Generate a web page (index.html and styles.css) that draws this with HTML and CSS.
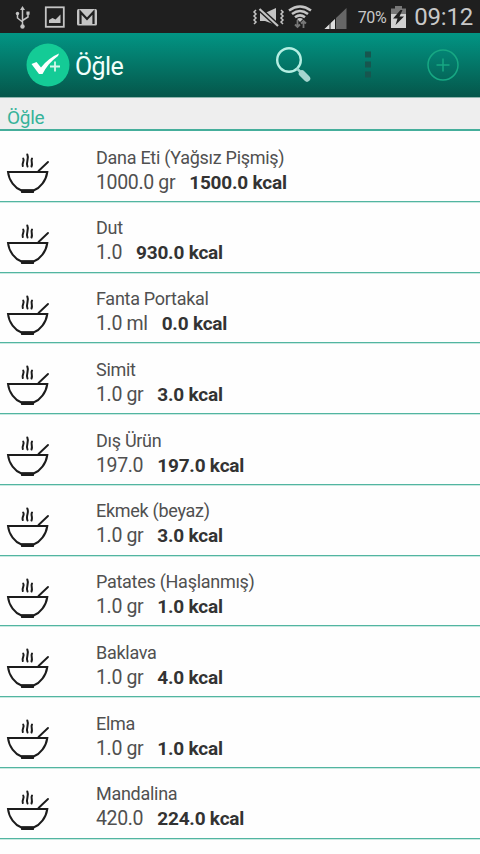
FILE: index.html
```
<!DOCTYPE html>
<html lang="tr">
<head>
    <meta charset="UTF-8">
    <meta name="viewport" content="width=device-width, initial-scale=1.0">
    <title>Öğle</title>
    <link rel="stylesheet" href="styles.css">
</head>
<body>
    <!-- shared bowl icon -->
    <svg class="defs">
        <symbol id="bowl" viewBox="0 0 50 48">
            <g fill="none" stroke="#1c1c1c">
                <path stroke-width="2" d="M8 23H47.3C46 32 40 39 34 41.3H21C15 39 9 32 8 23Z"/>
                <path stroke-width="1.9" stroke-linecap="round" d="M38.5 22L48 13"/>
                <path stroke-width="2" stroke-linecap="round" d="M23.2 9.5C25 12 21.5 14 22.8 17M27.3 5.5C29.5 10 25.5 12.5 27.5 17.5M32 9.5C30.5 12 33 14 31.5 17.5"/>
            </g>
            <path fill="#1c1c1c" d="M20.5 40.5H34.5L33.8 44H21.2Z"/>
        </symbol>
    </svg>

    <div class="status-bar">
        <svg width="100" height="33" viewBox="0 0 100 33">
            <g fill="none" stroke="#c4c4c4" stroke-width="1.5">
                <path d="M22.5 9V26M17.5 14V18L22.5 22M28 13V17L22.5 20.5"/>
                <rect x="45.8" y="7.3" width="18" height="19.5" stroke-width="1.8"/>
            </g>
            <g fill="#c4c4c4">
                <path d="M22.5 6L25 10H20Z"/>
                <circle cx="22.5" cy="26.5" r="2.2"/>
                <circle cx="17.5" cy="13.5" r="1.7"/>
                <rect x="26.4" y="11.5" width="3.2" height="3.2"/>
                <path d="M49 23V20L52.5 18L55.5 19.5L60.5 14.5V23Z"/>
                <rect x="77" y="9" width="20" height="16.5" rx="1.5"/>
            </g>
            <path fill="none" stroke="#1f1f1f" stroke-width="2.2" d="M80.5 24V12L87 19L93.5 12V24"/>
        </svg>
        <div class="status-right">
            <svg width="100" height="33" viewBox="0 0 100 33">
                <!-- vibrate / muted -->
                <g fill="none" stroke="#c4c4c4" stroke-width="1.5">
                    <path d="M7 10L5 12L7 14L5 16L7 18L5 20L7 22L5 24"/>
                    <path d="M32 10L34 12L32 14L34 16L32 18L34 20L32 22L34 24"/>
                </g>
                <path fill="#c4c4c4" d="M11 13H16L27 8V25L16 21H11Z"/>
                <path stroke="#1f1f1f" stroke-width="5" d="M10.5 9L29 26"/>
                <path stroke="#c4c4c4" stroke-width="2.2" d="M10.5 9L29 26"/>
                <!-- wifi -->
                <g fill="none" stroke="#c4c4c4" stroke-width="2.5">
                    <path d="M40 10.5Q51 2.5 62 10.5"/>
                    <path d="M43 14Q51 8 59 14"/>
                    <path d="M46 17.3Q51 13.5 56 17.3"/>
                </g>
                <path fill="#c4c4c4" d="M48 19Q51 17 54 19L51 22Z"/>
                <path fill="none" stroke="#777" stroke-width="1.8" d="M48.5 20V27M46 24.5L48.5 27L51 24.5M54.5 28V21M52 23.5L54.5 21L57 23.5"/>
                <!-- signal -->
                <path fill="#666" d="M97.5 8V29H75.5Z"/>
                <path fill="#ddd" d="M86 19V29H75.5Z"/>
                <path stroke="#1f1f1f" d="M81 20V29M86.5 17V29"/>
            </svg>
            <span class="percent">70%</span>
            <svg class="battery" width="15" height="22" viewBox="0 0 15 22">
                <path fill="#777" d="M4 0H11V2.5H15V9H0V2.5H4Z"/>
                <path fill="#d0d0d0" d="M0 8H15V22H0Z"/>
                <path fill="#1f1f1f" d="M9.5 4L2 12.5H6.5L4.5 19L13 10.5H8.5L11.5 4Z"/>
            </svg>
            <span class="clock">09:12</span>
        </div>
    </div>

    <div class="action-bar">
        <svg class="logo" width="44" height="44" viewBox="0 0 44 44">
            <circle cx="22" cy="22" r="21.5" fill="#14cb96"/>
            <path fill="#fff" d="M5.5 21L10.5 19L15 24.5C20 18 26 13.5 33 10.5L32 13C25 18 20 24 16.5 31H13Z"/>
            <path stroke="#d5f7ea" stroke-width="1.8" d="M24 23.5H34M29 18.5V28.5"/>
        </svg>
        <h1>Öğle</h1>
        <div class="actions">
            <svg width="38" height="38" viewBox="0 0 38 38">
                <circle cx="14" cy="14" r="11.8" fill="none" stroke="#b5eee2" stroke-width="2.4"/>
                <path stroke="#9fd5ce" stroke-width="2.5" d="M22 22.5L26 26.5"/>
                <path stroke="#a5d5cf" stroke-width="6.5" stroke-linecap="round" d="M27 27.5L32 32.5"/>
            </svg>
            <svg class="more" width="8" height="30" viewBox="0 0 8 30">
                <path fill="#17564f" d="M1 1.5H7V7.5H1ZM1 11.5H7V17.5H1ZM1 21.5H7V27.5H1Z"/>
            </svg>
            <svg width="34" height="34" viewBox="0 0 34 34">
                <g fill="none" stroke="#17a883" stroke-width="1.5">
                    <circle cx="17" cy="17" r="15"/>
                    <path d="M17 10.5V23.5M10.5 17H23.5"/>
                </g>
            </svg>
        </div>
    </div>

    <h2 class="section-title">Öğle</h2>

    <ul class="food-list">
        <li class="food">
            <svg class="icon"><use href="#bowl"/></svg>
            <div>
                <div class="name">Dana Eti (Yağsız Pişmiş)</div>
                <div class="detail"><span>1000.0 gr</span><b>1500.0 kcal</b></div>
            </div>
        </li>
        <li class="food">
            <svg class="icon"><use href="#bowl"/></svg>
            <div>
                <div class="name">Dut</div>
                <div class="detail"><span>1.0</span><b>930.0 kcal</b></div>
            </div>
        </li>
        <li class="food">
            <svg class="icon"><use href="#bowl"/></svg>
            <div>
                <div class="name">Fanta Portakal</div>
                <div class="detail"><span>1.0 ml</span><b>0.0 kcal</b></div>
            </div>
        </li>
        <li class="food">
            <svg class="icon"><use href="#bowl"/></svg>
            <div>
                <div class="name">Simit</div>
                <div class="detail"><span>1.0 gr</span><b>3.0 kcal</b></div>
            </div>
        </li>
        <li class="food">
            <svg class="icon"><use href="#bowl"/></svg>
            <div>
                <div class="name">Dış Ürün</div>
                <div class="detail"><span>197.0</span><b>197.0 kcal</b></div>
            </div>
        </li>
        <li class="food">
            <svg class="icon"><use href="#bowl"/></svg>
            <div>
                <div class="name">Ekmek (beyaz)</div>
                <div class="detail"><span>1.0 gr</span><b>3.0 kcal</b></div>
            </div>
        </li>
        <li class="food">
            <svg class="icon"><use href="#bowl"/></svg>
            <div>
                <div class="name">Patates (Haşlanmış)</div>
                <div class="detail"><span>1.0 gr</span><b>1.0 kcal</b></div>
            </div>
        </li>
        <li class="food">
            <svg class="icon"><use href="#bowl"/></svg>
            <div>
                <div class="name">Baklava</div>
                <div class="detail"><span>1.0 gr</span><b>4.0 kcal</b></div>
            </div>
        </li>
        <li class="food">
            <svg class="icon"><use href="#bowl"/></svg>
            <div>
                <div class="name">Elma</div>
                <div class="detail"><span>1.0 gr</span><b>1.0 kcal</b></div>
            </div>
        </li>
        <li class="food">
            <svg class="icon"><use href="#bowl"/></svg>
            <div>
                <div class="name">Mandalina</div>
                <div class="detail"><span>420.0</span><b>224.0 kcal</b></div>
            </div>
        </li>
    </ul>
</body>
</html>
```
FILE: styles.css
```
* {
    box-sizing: border-box;
}
body {
    font-family: Roboto, sans-serif;
    margin: 0;
    height: 854px;
    overflow: hidden;
    background-color: #fefefe;
    color: #505050;
}
svg {
    display: block;
    flex-shrink: 0;
}
.defs {
    display: none;
}
.status-bar {
    display: flex;
    justify-content: space-between;
    height: 33px;
    padding-right: 7px;
    background-color: #1f1f1f;
    color: #c8c8c8;
}
.status-right {
    display: flex;
    align-items: center;
}
.percent {
    margin: 2px 0 0 9px;
    font-size: 16px;
    letter-spacing: -0.4px;
    line-height: 33px;
}
.battery {
    margin: 1px 8px 0 5px;
}
.clock {
    margin-top: 1px;
    font-size: 24px;
    letter-spacing: -0.2px;
    line-height: 33px;
}
.action-bar {
    display: flex;
    align-items: center;
    height: 65px;
    padding: 0 20px 0 26px;
    background: linear-gradient(#029584, #05564a);
    border-bottom: 1px solid #8fb5ae;
}
.action-bar h1 {
    margin: 2px 0 0 5px;
    font-size: 25px;
    font-weight: 400;
    letter-spacing: -0.6px;
    color: #f0fffb;
}
.actions {
    display: flex;
    align-items: center;
    margin-left: auto;
}
.more {
    margin: 0 54px 0 51px;
}
.section-title {
    height: 33px;
    margin: 0;
    padding-left: 7px;
    font-size: 19px;
    font-weight: 400;
    letter-spacing: -0.3px;
    line-height: 39px;
    color: #36b39a;
    background-color: #eee;
    border-bottom: 2px solid #45ae9b;
}
.food-list {
    margin: 0;
    padding: 0;
    list-style: none;
}
.food {
    display: flex;
    height: 70.75px;
    padding-top: 13.5px;
    border-bottom: 1px solid #52b5a1;
    box-shadow: 0 1px #c9e9e1;
}
.icon {
    width: 50px;
    height: 48px;
    margin: 4.5px 46px 0 0;
}
.name {
    font-size: 18px;
    letter-spacing: -0.28px;
    line-height: 25px;
}
.detail {
    display: flex;
    gap: 14px;
    font-size: 19.5px;
    letter-spacing: -0.35px;
    line-height: 25px;
}
.detail b {
    font-size: 19px;
    letter-spacing: -0.2px;
    color: #333;
}
```
